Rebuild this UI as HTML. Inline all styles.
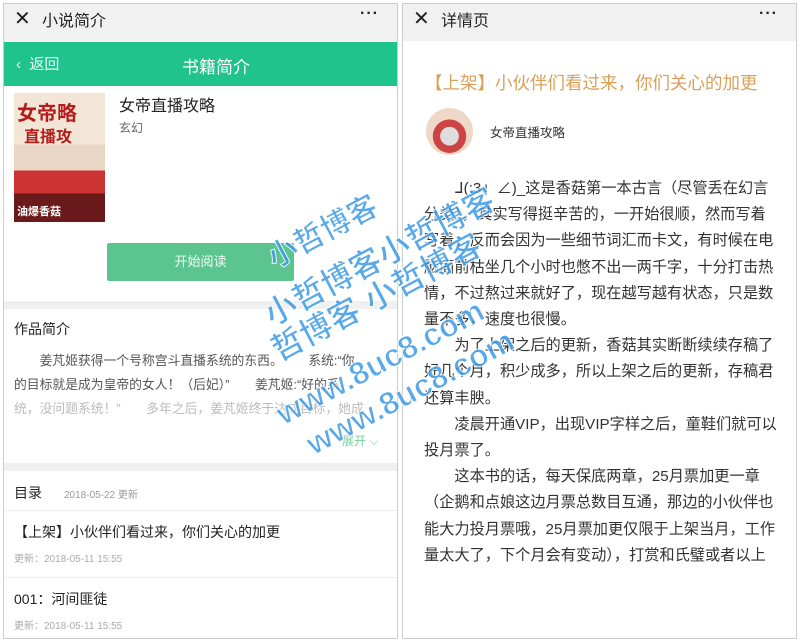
<!DOCTYPE html>
<html><head><meta charset="utf-8"><style>
*{margin:0;padding:0;box-sizing:border-box}
body{width:800px;height:641px;background:#fff;position:relative;overflow:hidden;font-family:"Liberation Sans","Noto Sans CJK SC",sans-serif;color:#333}
.p{position:absolute;top:3px;height:636px;border:1px solid #ccc;background:#fff;overflow:hidden}
.hd{height:37px;background:#f1f1f1;position:relative;font-size:16px;color:#222}
.hd .x{position:absolute;left:10px;top:2px;font-size:20px;font-weight:300}
.hd .t{position:absolute;left:38px;top:3px}
.hd .d{position:absolute;right:18px;top:1px;font-size:16px;letter-spacing:1px;font-weight:bold}
.abs{position:absolute;white-space:nowrap}
.wm{position:absolute;color:#3d9be6;font-weight:bold;white-space:nowrap;transform:rotate(-28deg);transform-origin:left top;-webkit-text-stroke:1px #fff;opacity:.85;z-index:5}
</style></head><body>
<div class="p" style="left:3px;width:395px">
 <div class="hd"><span class="x">✕</span><span class="t">小说简介</span><span class="d">···</span></div>
 <div style="position:absolute;top:38px;left:0;width:393px;height:44px;background:#20c38b;color:#fff">
  <span class="abs" style="left:12px;top:11px;font-size:15px;color:#e8fff4">‹&nbsp; 返回</span>
  <span class="abs" style="left:178px;top:11px;font-size:17px">书籍简介</span>
 </div>
 <div style="position:absolute;left:10px;top:89px;width:91px;height:129px;background:linear-gradient(#f3e6d6 0 40%,#e9d6c4 40% 60%,#c33 60% 78%,#6a1a1a 78%)">
  <span class="abs" style="left:3px;top:4px;font-size:20px;color:#b51d1d;font-weight:bold">女帝略</span>
  <span class="abs" style="left:10px;top:30px;font-size:16px;color:#b51d1d;font-weight:bold">直播攻</span>
  <span class="abs" style="left:3px;top:110px;font-size:11px;color:#fff;font-weight:bold">油爆香菇</span>
 </div>
 <span class="abs" style="left:115px;top:88px;font-size:16px;color:#222">女帝直播攻略</span>
 <span class="abs" style="left:115px;top:115px;font-size:12px;color:#666">玄幻</span>
 <div style="position:absolute;left:103px;top:239px;width:187px;height:38px;background:#5cc48f;border-radius:2px;color:#eafff3;font-size:13px;text-align:center;line-height:38px">开始阅读</div>
 <div style="position:absolute;left:0;top:297px;width:393px;height:8px;background:#f0f0f0"></div>
 <span class="abs" style="left:10px;top:315px;font-size:14px;color:#222">作品简介</span>
 <div class="abs" style="left:10px;top:345px;width:375px;font-size:12.8px;line-height:24px;color:#555;white-space:normal">
  <div>&emsp;&emsp;姜芃姬获得一个号称宫斗直播系统的东西。&emsp;&emsp;系统:“你</div>
  <div>的目标就是成为皇帝的女人！（后妃）”&emsp;&emsp;姜芃姬:“好的系</div>
  <div style="color:#bbb">统，没问题系统！”&emsp;&emsp;多年之后，姜芃姬终于达成目标，她成</div>
 </div>
 <span class="abs" style="left:338px;top:428px;font-size:12px;color:#7ccfa3">展开 ⌵</span>
 <div style="position:absolute;left:0;top:459px;width:393px;height:8px;background:#f0f0f0"></div>
 <span class="abs" style="left:10px;top:479px;font-size:14px;color:#222">目录</span>
 <span class="abs" style="left:60px;top:482px;font-size:10px;color:#999">2018-05-22 更新</span>
 <div style="position:absolute;left:0;top:506px;width:393px;height:1px;background:#eee"></div>
 <span class="abs" style="left:10px;top:518px;font-size:14px;color:#222">【上架】小伙伴们看过来，你们关心的加更</span>
 <span class="abs" style="left:10px;top:546px;font-size:10px;color:#aaa">更新：2018-05-11 15:55</span>
 <div style="position:absolute;left:0;top:573px;width:393px;height:1px;background:#eee"></div>
 <span class="abs" style="left:10px;top:585px;font-size:14px;color:#222">001：河间匪徒</span>
 <span class="abs" style="left:10px;top:613px;font-size:10px;color:#aaa">更新：2018-05-11 15:55</span>
</div>
<div class="p" style="left:402px;width:395px">
 <div class="hd"><span class="x">✕</span><span class="t">详情页</span><span class="d">···</span></div>
 <span class="abs" style="left:22px;top:66px;font-size:17.5px;color:#d9a05a">【上架】小伙伴们看过来，你们关心的加更</span>
 <div style="position:absolute;left:23px;top:104px;width:47px;height:47px;border-radius:50%;background:radial-gradient(circle at 50% 60%,#ddd 0 25%,#c44 26% 45%,#f0d8c8 46%)"></div>
 <span class="abs" style="left:87px;top:118px;font-size:12.5px;color:#333">女帝直播攻略</span>
 <div style="position:absolute;left:21px;top:172px;width:356px;font-size:15.2px;line-height:26.2px;color:#333">
  <p style="text-indent:2em">ᒧ(:3」∠)_这是香菇第一本古言（尽管丢在幻言分类），其实写得挺辛苦的，一开始很顺，然而写着写着，反而会因为一些细节词汇而卡文，有时候在电脑面前枯坐几个小时也憋不出一两千字，十分打击热情，不过熬过来就好了，现在越写越有状态，只是数量不多，速度也很慢。</p>
  <p style="text-indent:2em">为了上架之后的更新，香菇其实断断续续存稿了好几个月，积少成多，所以上架之后的更新，存稿君还算丰腴。</p>
  <p style="text-indent:2em">凌晨开通VIP，出现VIP字样之后，童鞋们就可以投月票了。</p>
  <p style="text-indent:2em">这本书的话，每天保底两章，25月票加更一章（企鹅和点娘这边月票总数目互通，那边的小伙伴也能大力投月票哦，25月票加更仅限于上架当月，工作量太大了，下个月会有变动），打赏和氏璧或者以上</p>
 </div>
</div>
<div class="wm" style="left:258px;top:238px;font-size:30px">小哲博客</div>
<div class="wm" style="left:255px;top:295px;font-size:32px">小哲博客小哲博客</div>
<div class="wm" style="left:262px;top:330px;font-size:32px">哲博客 小哲博客</div>
<div class="wm" style="left:270px;top:400px;font-size:32px">www.8uc8.com</div>
<div class="wm" style="left:300px;top:430px;font-size:32px">www.8uc8.com</div>
</body></html>
